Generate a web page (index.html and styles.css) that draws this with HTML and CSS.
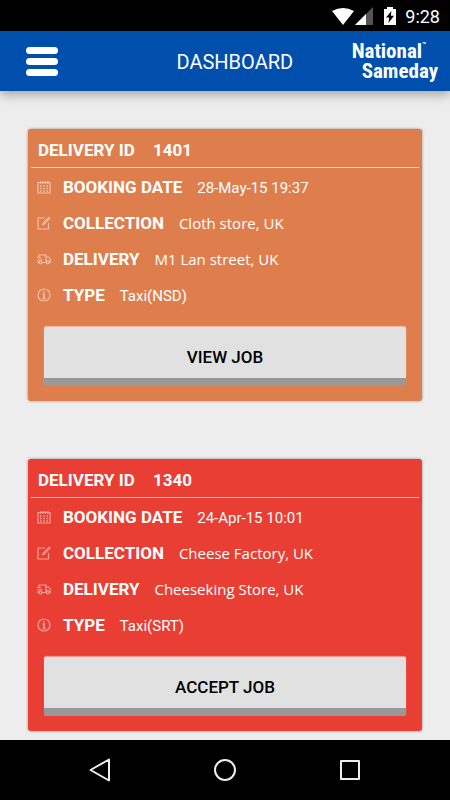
FILE: index.html
```html
<!DOCTYPE html>
<html lang="en">
<head>
<meta charset="utf-8">
<meta name="viewport" content="width=device-width, initial-scale=1">
<title>Dashboard</title>
<link rel="stylesheet" href="styles.css">
</head>
<body>
<svg class="sprite" aria-hidden="true">
  <symbol id="calendar" viewBox="0 0 14 14"><path d="M1 2.500h12v10.500h-12zM3.500 1v3M6 1v3M8.500 1v3M11 1v3"/><path d="M3 6h8M3 8.500h8M3 11h8" stroke-width="1.500" stroke-dasharray="1.600 1.600"/></symbol>
  <symbol id="edit" viewBox="0 0 14 14"><path d="M8 2H1v11h10.500V7"/><path d="M5.500 9l.5-2L12 .8l1.400 1.200L7.500 8.300z" fill="rgba(255,255,255,0.4)" stroke-width=".6"/></symbol>
  <symbol id="truck" viewBox="0 0 14 14"><path d="M5 10.500h4M2 10.500H1V8.500M2 6V3h7v7.500M9 5h2.500l2 2.500v3h-1M0 5.500h4M1 7.500h4"/><circle cx="3.500" cy="10.300" r="1.500"/><circle cx="10.800" cy="10.300" r="1.500"/></symbol>
  <symbol id="info" viewBox="0 0 14 14"><circle cx="7" cy="7" r="6"/><path d="M5.500 6H7v4.500M5.500 10.500h3M7 3v1.500" stroke-width="1.600"/></symbol>
</svg>
<div class="status">
  <svg width="24" height="20" viewBox="0 0 24 20" aria-label="Wi-Fi"><path fill="#fff" d="M1 5Q12-1 23 5L12 19z"/></svg>
  <svg width="18" height="20" viewBox="0 0 18 20" aria-label="Signal"><path fill="#555" d="M18 1v18H0z"/><path fill="#fff" d="M11 8v11H0z"/></svg>
  <svg class="battery" width="14" height="20" viewBox="0 0 14 20" aria-label="Charging"><path fill="#fff" d="M4 1h6v2h3v16H1V3h3z"/><path d="M8.500 5L3 11.500h3.200L5.500 17 11 9.800H7.800z"/></svg>
  <time>9:28</time>
</div>
<header class="bar">
  <button class="menu" type="button" aria-label="Menu"><span></span><span></span><span></span></button>
  <h1>DASHBOARD</h1>
  <div class="logo"><div class="first">National<small>™</small></div><div class="second">Sameday</div></div>
</header>
<main>
  <article class="card orange">
    <h2>DELIVERY ID <span>1401</span></h2>
    <dl>
      <div class="row"><svg><use href="#calendar"/></svg><dt>BOOKING DATE</dt><dd>28-May-15 19:37</dd></div>
      <div class="row"><svg><use href="#edit"/></svg><dt>COLLECTION</dt><dd class="place">Cloth store, UK</dd></div>
      <div class="row"><svg><use href="#truck"/></svg><dt>DELIVERY</dt><dd class="place">M1 Lan street, UK</dd></div>
      <div class="row"><svg><use href="#info"/></svg><dt>TYPE</dt><dd>Taxi(NSD)</dd></div>
    </dl>
    <button class="action" type="button">VIEW JOB</button>
  </article>
  <article class="card red">
    <h2>DELIVERY ID <span>1340</span></h2>
    <dl>
      <div class="row"><svg><use href="#calendar"/></svg><dt>BOOKING DATE</dt><dd>24-Apr-15 10:01</dd></div>
      <div class="row"><svg><use href="#edit"/></svg><dt>COLLECTION</dt><dd class="place">Cheese Factory, UK</dd></div>
      <div class="row"><svg><use href="#truck"/></svg><dt>DELIVERY</dt><dd class="place">Cheeseking Store, UK</dd></div>
      <div class="row"><svg><use href="#info"/></svg><dt>TYPE</dt><dd>Taxi(SRT)</dd></div>
    </dl>
    <button class="action" type="button">ACCEPT JOB</button>
  </article>
</main>
<nav>
  <button type="button" aria-label="Back"><svg viewBox="0 0 24 24"><path d="M21 1.500v21L2.500 12z"/></svg></button>
  <button type="button" aria-label="Home"><svg viewBox="0 0 24 24"><circle cx="12" cy="12" r="10"/></svg></button>
  <button type="button" aria-label="Recent apps"><svg viewBox="0 0 24 24"><path d="M3 3h18v18H3z"/></svg></button>
</nav>
</body>
</html>
```
FILE: styles.css
```css
* { box-sizing: border-box; }

body {
  margin: 0;
  min-height: 100vh;
  display: flex;
  flex-direction: column;
  background: #ededed;
  font-family: Roboto, sans-serif;
}

button {
  border: 0;
  padding: 0;
  background: none;
  font-family: inherit;
}

.sprite { display: none; }

.status {
  height: 31px;
  padding: 1px 10px 0;
  display: flex;
  align-items: center;
  justify-content: flex-end;
  background: #000;
  color: #fff;
  font-size: 18px;
}

.status .battery { margin: 0 8px 0 10px; }

.bar {
  height: 60px;
  padding: 0 12px 0 26px;
  display: grid;
  grid-template-columns: auto 1fr auto;
  align-items: center;
  background: #004fac;
  color: #fff;
  box-shadow: 0 2px 12px rgba(0, 0, 0, 0.4);
}

.menu {
  width: 32px;
  display: grid;
  gap: 4px;
}

.menu span {
  height: 7px;
  border-radius: 4px;
  background: #fff;
}

h1 {
  margin: 0;
  padding: 2px 0 0 60px;
  text-align: center;
  font-size: 20px;
  font-weight: 400;
}

.logo {
  font: 700 21px/20px "Liberation Sans Narrow", "Roboto Condensed", "Liberation Sans", sans-serif;
}

.logo .first {
  display: flex;
  align-items: flex-start;
}

.logo small {
  font-size: 7px;
  line-height: 8px;
}

.logo .second { padding-left: 10px; }

main {
  flex: 1;
  padding: 38px 28px 9px;
  display: flex;
  flex-direction: column;
  gap: 58px;
}

.card {
  padding: 0 3px 15px;
  border-radius: 3px;
  color: #fff;
  box-shadow: 0 0 3px rgba(0, 0, 0, 0.4);
}

.orange { background: #df7e4d; }
.red { background: #e93e33; }

h2 {
  margin: 0;
  padding: 3px 7px 0;
  height: 39px;
  border-bottom: 1px solid rgba(255, 255, 255, 0.65);
  font-size: 17px;
  line-height: 36px;
  font-weight: 700;
}

h2 span { margin-left: 14px; }

dl { margin: 1px 6px 14px; }

.row {
  height: 36px;
  display: flex;
  align-items: center;
}

.row svg {
  width: 14px;
  height: 14px;
  margin-right: 12px;
  fill: none;
  stroke: rgba(255, 255, 255, 0.5);
  stroke-width: 1.2;
}

dt {
  font-size: 17px;
  font-weight: 700;
}

dd {
  margin: 1px 0 0 15px;
  font-size: 15px;
}

.place { margin-top: 0; font-family: "Open Sans", sans-serif; }

.action {
  display: block;
  width: calc(100% - 26px);
  height: 59px;
  margin: 0 13px;
  border-bottom: 8px solid #999;
  border-radius: 2px;
  background: #e1e1e1;
  padding-top: 8px;
  color: #000;
  font-size: 17px;
  font-weight: 500;
  box-shadow: 0 -1px 1px rgba(255, 255, 255, 0.5);
}

nav {
  height: 60px;
  padding: 0 38px;
  display: grid;
  grid-template-columns: repeat(3, 1fr);
  place-items: center;
  background: #000;
}

nav button { height: 24px; }

nav svg {
  width: 24px;
  height: 24px;
  fill: none;
  stroke: #eee;
  stroke-width: 2;
  stroke-linejoin: round;
}
```
